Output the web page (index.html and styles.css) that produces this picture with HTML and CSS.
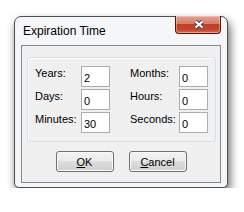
FILE: index.html
```html
<!DOCTYPE html>
<html lang="en">
<head>
	<meta charset="UTF-8" />
	<title>Expiration Time</title>
	<link rel="stylesheet" href="styles.css">
</head>
<body>
	<div class="window">
		<!-- 标题栏 -->
		<div class="titlebar">
			<span class="title">Expiration Time</span>
			<span class="close">
				<svg width="12" height="9" viewBox="0 0 12 9">
					<path d="M2.5 1.5 L9.5 7.5 M9.5 1.5 L2.5 7.5" stroke="#3b4656" stroke-width="4.2" fill="none" />
					<path d="M2.5 1.5 L9.5 7.5 M9.5 1.5 L2.5 7.5" stroke="#fff" stroke-width="2.2" fill="none" />
				</svg>
			</span>
		</div>
		<!-- 内容 -->
		<div class="client">
			<div class="group">
				<label class="lbl">Years:</label>
				<input type="text" class="num" value="2" />
				<label class="lbl">Months:</label>
				<input type="text" class="num" value="0" />
				<label class="lbl">Days:</label>
				<input type="text" class="num" value="0" />
				<label class="lbl">Hours:</label>
				<input type="text" class="num" value="0" />
				<label class="lbl">Minutes:</label>
				<input type="text" class="num" value="30" />
				<label class="lbl">Seconds:</label>
				<input type="text" class="num" value="0" />
			</div>
			<div class="buttons">
				<button class="btn"><u>O</u>K</button>
				<button class="btn"><u>C</u>ancel</button>
			</div>
		</div>
	</div>
</body>
</html>
```

FILE: styles.css
```css
html,
body {
	margin: 0;
	padding: 0;
	background-color: #fff;
	font-family: "Segoe UI", "Liberation Sans", Arial, sans-serif;
}

* {
	box-sizing: border-box;
}

.window {
	width: 214px;
	height: 172px;
	margin: 16px 0 0 14px;
	border: 1px solid #4a4e54;
	border-radius: 7px 7px 5px 5px;
	background-color: #f5f6f7;
	box-shadow: 2px 5px 10px rgba(0, 0, 0, .6);
	display: flex;
	flex-direction: column;
}

.titlebar {
	height: 28px;
	display: flex;
	align-items: flex-start;
	justify-content: space-between;
}

.title {
	padding: 7px 0 0 8px;
	font-size: 12px;
	line-height: 14px;
	color: #000;
}

.close {
	width: 46px;
	height: 18px;
	margin-right: 6px;
	margin-top: -1px;
	border: 1px solid #4a1a12;
	border-top: none;
	border-radius: 0 0 4px 4px;
	background: linear-gradient(#e8a090 0%, #d87c66 45%, #c23d26 50%, #c5452c 80%, #da7255 100%);
	box-shadow: inset 0 0 0 1px rgba(255, 220, 210, .45);
	display: flex;
	align-items: center;
	justify-content: center;
}

.close svg {
	display: block;
	margin-left: 2px;
}

.client {
	flex: 1;
	margin: 0 6px 4px 6px;
	border: 1px solid #838990;
	background-color: #f0f0f0;
	padding: 11px 0 0 5px;
}

.group {
	width: 189px;
	padding: 8px 0 8px 7px;
	border: 1px solid #d5dfe5;
	border-radius: 3px;
	box-shadow: inset 1px 1px 0 #fff;
	display: grid;
	grid-template-columns: 46px 49px 49px 29px;
	grid-auto-rows: 21px;
	row-gap: 2px;
	font-family: "Liberation Sans", Arial, sans-serif;
	font-size: 11px;
}

.lbl {
	padding-top: 1px;
	line-height: 13px;
	color: #000;
}

.num {
	width: 29px;
	height: 21px;
	margin: 0;
	padding: 2px 0 0 2px;
	border: 1px solid #abadb3;
	background-color: #fff;
	font-family: "Liberation Sans", Arial, sans-serif;
	font-size: 11px;
	line-height: 13px;
	color: #000;
	outline: none;
}

.buttons {
	margin: 9px 0 0 -5px;
	display: flex;
	justify-content: center;
	gap: 15px;
}

.btn {
	width: 58px;
	height: 21px;
	padding: 0;
	border: 1px solid #707070;
	border-radius: 3px;
	background: linear-gradient(#f2f2f2 0%, #ebebeb 50%, #dddddd 50%, #cfcfcf 100%);
	box-shadow: inset 0 0 0 1px #fbfbfb;
	font-family: "Liberation Sans", Arial, sans-serif;
	font-size: 11px;
	color: #000;
}
```
